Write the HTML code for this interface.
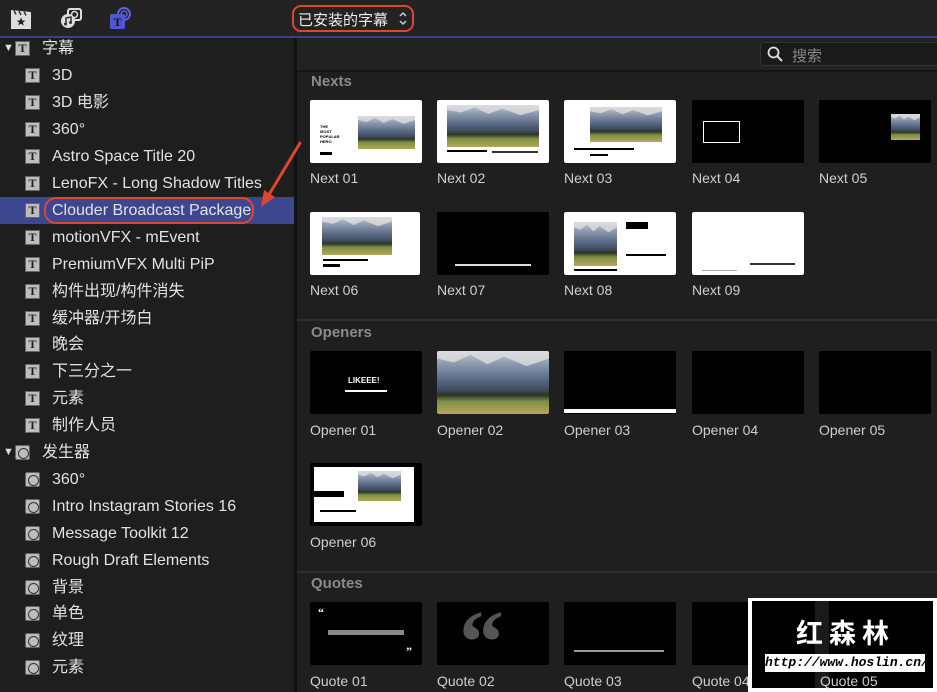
<!DOCTYPE html>
<html><head><meta charset="utf-8">
<style>
*{margin:0;padding:0;box-sizing:border-box}
body{width:937px;height:692px;background:#1f1f1f;overflow:hidden;position:relative;font-family:"Liberation Sans","Noto Sans CJK SC",sans-serif;color:#e2e2e2}
.a{position:absolute}
.top{left:0;top:0;width:937px;height:36px;background:#232323}
.bl{left:0;top:36px;width:937px;height:2px;background:#3b3f8a}
.side{left:0;top:38px;width:294px;height:654px;background:#1e1e1e}
.div{left:294px;top:38px;width:3px;height:654px;background:#121212}
.row{position:absolute;left:0;width:294px;height:27px;font-size:16px;line-height:27px;white-space:nowrap}
.row .ic{position:absolute;top:6px;width:15px;height:15px;background:#bdbdbd;border:1px solid #666;color:#222;font:bold 12px/13px "Liberation Serif",serif;text-align:center}
.row .ic.g{border-radius:2px;font:bold 9px/13px "Liberation Sans",sans-serif}
.row .ic.g:after{content:"";position:absolute;left:2px;top:2px;width:9px;height:9px;border:1px solid #333;border-radius:50%}
.row span.t{position:absolute;left:52px}
.sel{background:#3d4790}
.tri{position:absolute;left:3px;font-size:11px;color:#ddd}
.hdr{font-size:15px;font-weight:bold;color:#8a8a8a;position:absolute;left:311px}
.th{position:absolute;width:112px;height:63px;background:#000;border-radius:2px;overflow:hidden}
.w{background:#fff}
.lb{position:absolute;font-size:14px;color:#cfcfcf}
.m{position:absolute;background:linear-gradient(#c8cbd0 0%,#8e9bb0 20%,#5a6a86 45%,#3f4c5f 62%,#2a3526 70%,#7d8f45 80%,#b5a75a 100%);overflow:hidden}
.m:before{content:"";position:absolute;left:0;top:0;width:100%;height:60%;background:linear-gradient(#d9dbde,#b8bcc3);clip-path:polygon(0 0,100% 0,100% 20%,80% 40%,60% 15%,45% 35%,30% 10%,15% 30%,0 20%)}
.sep{position:absolute;left:297px;width:640px;height:2px;background:#2e2e2e}
</style></head><body>
<div class="a top"></div>
<div class="a bl"></div>
<svg class="a" style="left:10px;top:8px" width="22" height="22" viewBox="0 0 22 22"><rect x="1" y="7" width="20" height="14" fill="#ddd"/><path d="M1 2l20 2v3H1z" fill="#ddd"/><path d="M4 2.5l2 4M9 3l2 4M14 3.5l2 4" stroke="#333" stroke-width="1.5"/><path d="M11 9.5l1.3 3h3l-2.4 2 1 3-2.9-1.8-2.9 1.8 1-3-2.4-2h3z" fill="#222"/></svg>
<svg class="a" style="left:59px;top:7px" width="24" height="22" viewBox="0 0 24 22"><rect x="9" y="2" width="13" height="11" rx="2" fill="none" stroke="#ddd" stroke-width="2"/><circle cx="15.5" cy="7.5" r="3" fill="none" stroke="#ddd" stroke-width="1.5"/><circle cx="9" cy="14" r="7" fill="#ddd"/><path d="M7 17V11l5-1v5" stroke="#333" stroke-width="1.5" fill="none"/><circle cx="6.5" cy="17" r="1.5" fill="#333"/><circle cx="11.5" cy="15.5" r="1.5" fill="#333"/></svg>
<svg class="a" style="left:108px;top:6px" width="24" height="24" viewBox="0 0 24 24"><circle cx="16" cy="8" r="6" fill="none" stroke="#5b63d8" stroke-width="2"/><circle cx="16" cy="8" r="3" fill="none" stroke="#5b63d8" stroke-width="1.5"/><rect x="2" y="8" width="15" height="15" rx="2" fill="#4f58d2"/><text x="9.5" y="20" font-family="Liberation Serif" font-weight="bold" font-size="12" text-anchor="middle" fill="#111">T</text></svg>
<div class="a" style="left:292px;top:5px;width:122px;height:27px;border:2px solid #e0452f;border-radius:9px"></div>
<div class="a" style="left:298px;top:9px;font-size:15px;color:#eee">已安装的字幕</div>
<svg class="a" style="left:398px;top:11px" width="10" height="15" viewBox="0 0 10 15"><path d="M2 5l3-3 3 3M2 10l3 3 3-3" stroke="#ccc" stroke-width="1.5" fill="none"/></svg>

<div class="a side"></div>
<div class="a div"></div>

<div class="row" style="top:35px"><span class="tri">▼</span><span class="ic" style="left:15px">T</span><span class="t" style="left:42px">字幕</span></div>
<div class="row" style="top:62px"><span class="ic" style="left:25px">T</span><span class="t">3D</span></div>
<div class="row" style="top:89px"><span class="ic" style="left:25px">T</span><span class="t">3D 电影</span></div>
<div class="row" style="top:116px"><span class="ic" style="left:25px">T</span><span class="t">360°</span></div>
<div class="row" style="top:143px"><span class="ic" style="left:25px">T</span><span class="t">Astro Space Title 20</span></div>
<div class="row" style="top:170px"><span class="ic" style="left:25px">T</span><span class="t">LenoFX - Long Shadow Titles</span></div>
<div class="row sel" style="top:197px"><span class="ic" style="left:25px">T</span><span class="t">Clouder Broadcast Package</span></div>
<div class="a" style="left:44px;top:197px;width:210px;height:27px;border:2px solid #e0452f;border-radius:12px"></div>
<div class="row" style="top:224px"><span class="ic" style="left:25px">T</span><span class="t">motionVFX - mEvent</span></div>
<div class="row" style="top:251px"><span class="ic" style="left:25px">T</span><span class="t">PremiumVFX Multi PiP</span></div>
<div class="row" style="top:278px"><span class="ic" style="left:25px">T</span><span class="t">构件出现/构件消失</span></div>
<div class="row" style="top:305px"><span class="ic" style="left:25px">T</span><span class="t">缓冲器/开场白</span></div>
<div class="row" style="top:331px"><span class="ic" style="left:25px">T</span><span class="t">晚会</span></div>
<div class="row" style="top:358px"><span class="ic" style="left:25px">T</span><span class="t">下三分之一</span></div>
<div class="row" style="top:385px"><span class="ic" style="left:25px">T</span><span class="t">元素</span></div>
<div class="row" style="top:412px"><span class="ic" style="left:25px">T</span><span class="t">制作人员</span></div>
<div class="row" style="top:439px"><span class="tri">▼</span><span class="ic g" style="left:15px"></span><span class="t" style="left:42px">发生器</span></div>
<div class="row" style="top:466px"><span class="ic g" style="left:25px"></span><span class="t">360°</span></div>
<div class="row" style="top:493px"><span class="ic g" style="left:25px"></span><span class="t">Intro Instagram Stories 16</span></div>
<div class="row" style="top:520px"><span class="ic g" style="left:25px"></span><span class="t">Message Toolkit 12</span></div>
<div class="row" style="top:547px"><span class="ic g" style="left:25px"></span><span class="t">Rough Draft Elements</span></div>
<div class="row" style="top:574px"><span class="ic g" style="left:25px"></span><span class="t">背景</span></div>
<div class="row" style="top:600px"><span class="ic g" style="left:25px"></span><span class="t">单色</span></div>
<div class="row" style="top:627px"><span class="ic g" style="left:25px"></span><span class="t">纹理</span></div>
<div class="row" style="top:654px"><span class="ic g" style="left:25px"></span><span class="t">元素</span></div>

<svg class="a" style="left:240px;top:135px" width="70" height="80" viewBox="0 0 70 80"><path d="M60 8L27 63" stroke="#e0452f" stroke-width="3" stroke-linecap="round"/><path d="M21 72l3-17 11 7z" fill="#e0452f"/></svg>

<div class="a" style="left:297px;top:38px;width:640px;height:32px;background:#222"></div>
<div class="a" style="left:297px;top:70px;width:640px;height:2px;background:#151515"></div>
<div class="a" style="left:760px;top:42px;width:180px;height:24px;background:#1a1a1a;border:1px solid #333;border-radius:4px"></div>
<svg class="a" style="left:767px;top:46px" width="16" height="16" viewBox="0 0 16 16"><circle cx="6.5" cy="6.5" r="5" fill="none" stroke="#ddd" stroke-width="1.8"/><path d="M10 10l5 5" stroke="#ddd" stroke-width="2"/></svg>
<div class="a" style="left:792px;top:45px;font-size:15px;color:#888">搜索</div>

<div class="hdr" style="top:73px">Nexts</div>
<div class="th w" style="left:310px;top:100px"><div class="m" style="left:48px;top:16px;width:57px;height:33px"></div><div class="a" style="left:10px;top:24px;font:bold 4px/5px sans-serif;color:#000">THE<br>MOST<br>POPULAR<br>HERO</div><div class="a" style="left:10px;top:52px;width:12px;height:3px;background:#000"></div></div>
<div class="th w" style="left:437px;top:100px"><div class="m" style="left:10px;top:5px;width:92px;height:42px"></div><div class="a" style="left:10px;top:50px;width:40px;height:2px;background:#000"></div><div class="a" style="left:55px;top:51px;width:46px;height:2px;background:#333"></div></div>
<div class="th w" style="left:564px;top:100px"><div class="m" style="left:26px;top:7px;width:72px;height:35px"></div><div class="a" style="left:10px;top:48px;width:60px;height:2px;background:#000"></div><div class="a" style="left:26px;top:54px;width:18px;height:2px;background:#000"></div></div>
<div class="th" style="left:692px;top:100px"><div class="a" style="left:11px;top:21px;width:37px;height:22px;border:1.5px solid #fff"></div></div>
<div class="th" style="left:819px;top:100px"><div class="m" style="left:72px;top:14px;width:29px;height:26px"></div></div>
<div class="lb" style="left:310px;top:170px">Next 01</div><div class="lb" style="left:437px;top:170px">Next 02</div><div class="lb" style="left:564px;top:170px">Next 03</div><div class="lb" style="left:692px;top:170px">Next 04</div><div class="lb" style="left:819px;top:170px">Next 05</div>

<div class="th w" style="left:310px;top:212px;width:110px"><div class="m" style="left:12px;top:5px;width:70px;height:38px"></div><div class="a" style="left:13px;top:47px;width:45px;height:2px;background:#000"></div><div class="a" style="left:13px;top:52px;width:17px;height:3px;background:#000"></div></div>
<div class="th" style="left:437px;top:212px"><div class="a" style="left:18px;top:52px;width:76px;height:2px;background:#ddd"></div></div>
<div class="th w" style="left:564px;top:212px"><div class="m" style="left:10px;top:10px;width:43px;height:44px"></div><div class="a" style="left:62px;top:10px;width:22px;height:7px;background:#000"></div><div class="a" style="left:62px;top:42px;width:40px;height:2px;background:#000"></div><div class="a" style="left:10px;top:57px;width:43px;height:2px;background:#000"></div></div>
<div class="th w" style="left:692px;top:212px"><div class="a" style="left:58px;top:51px;width:45px;height:1.5px;background:#333"></div><div class="a" style="left:10px;top:58px;width:35px;height:1px;background:#aaa"></div></div>
<div class="lb" style="left:310px;top:282px">Next 06</div><div class="lb" style="left:437px;top:282px">Next 07</div><div class="lb" style="left:564px;top:282px">Next 08</div><div class="lb" style="left:692px;top:282px">Next 09</div>

<div class="sep" style="top:319px"></div>
<div class="hdr" style="top:324px">Openers</div>
<div class="th" style="left:310px;top:351px"><div class="a" style="left:38px;top:25px;font:bold 8px sans-serif;color:#fff">LIKEEE!</div><div class="a" style="left:35px;top:39px;width:42px;height:1.5px;background:#fff"></div></div>
<div class="th" style="left:437px;top:351px"><div class="m" style="left:0;top:0;width:112px;height:63px"></div></div>
<div class="th" style="left:564px;top:351px"><div class="a" style="left:0;top:58px;width:112px;height:4px;background:#fff"></div></div>
<div class="th" style="left:692px;top:351px"></div>
<div class="th" style="left:819px;top:351px"></div>
<div class="lb" style="left:310px;top:422px">Opener 01</div><div class="lb" style="left:437px;top:422px">Opener 02</div><div class="lb" style="left:564px;top:422px">Opener 03</div><div class="lb" style="left:692px;top:422px">Opener 04</div><div class="lb" style="left:819px;top:422px">Opener 05</div>
<div class="th" style="left:310px;top:463px"><div class="a w" style="left:4px;top:4px;width:100px;height:55px"></div><div class="m" style="left:48px;top:8px;width:43px;height:30px"></div><div class="a" style="left:4px;top:28px;width:30px;height:6px;background:#000"></div><div class="a" style="left:10px;top:47px;width:36px;height:2px;background:#000"></div></div>
<div class="lb" style="left:310px;top:534px">Opener 06</div>

<div class="sep" style="top:571px"></div>
<div class="hdr" style="top:575px">Quotes</div>
<div class="th" style="left:310px;top:602px"><div class="a" style="left:8px;top:3px;font:bold 12px serif;color:#fff">“</div><div class="a" style="left:96px;top:42px;font:bold 12px serif;color:#fff">”</div><div class="a" style="left:18px;top:28px;width:76px;height:5px;background:#888"></div></div>
<div class="th" style="left:437px;top:602px"><div class="a" style="left:22px;top:-4px;font:bold 90px/90px serif;color:#555">“</div></div>
<div class="th" style="left:564px;top:602px"><div class="a" style="left:10px;top:48px;width:90px;height:2px;background:#999"></div></div>
<div class="th" style="left:692px;top:602px"></div>
<div class="lb" style="left:310px;top:673px">Quote 01</div><div class="lb" style="left:437px;top:673px">Quote 02</div><div class="lb" style="left:564px;top:673px">Quote 03</div><div class="lb" style="left:692px;top:673px">Quote 04</div>

<div class="a" style="left:748px;top:598px;width:189px;height:94px;background:#fff"></div>
<div class="a" style="left:752px;top:601px;width:181px;height:87px;background:#000"></div>
<div class="a" style="left:815px;top:601px;width:14px;height:87px;background:#1a1a1a"></div>
<div class="a" style="left:796px;top:612px;font-size:27px;font-weight:bold;color:#fff;letter-spacing:6px">红森林</div>
<div class="a" style="left:765px;top:654px;width:160px;height:18px;background:#fff;color:#000;font:italic bold 13px/18px 'Liberation Mono',monospace;text-align:center">http://www.hoslin.cn/</div>
<div class="lb" style="left:820px;top:673px">Quote 05</div>
</body></html>
